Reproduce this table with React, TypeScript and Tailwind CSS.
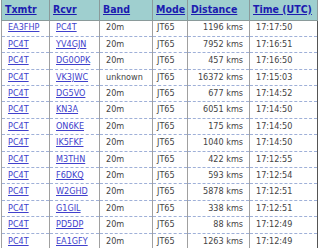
import React from "react";

const rows: [string, string, string, string, string, string][] = [
  ["EA3FHP", "PC4T", "20m", "JT65", "1196 kms", "17:17:50"],
  ["PC4T", "YV4GJN", "20m", "JT65", "7952 kms", "17:16:51"],
  ["PC4T", "DG0OPK", "20m", "JT65", "457 kms", "17:16:50"],
  ["PC4T", "VK3JWC", "unknown", "JT65", "16372 kms", "17:15:03"],
  ["PC4T", "DG5VO", "20m", "JT65", "677 kms", "17:14:52"],
  ["PC4T", "KN3A", "20m", "JT65", "6051 kms", "17:14:50"],
  ["PC4T", "ON6KE", "20m", "JT65", "175 kms", "17:14:50"],
  ["PC4T", "IK5FKF", "20m", "JT65", "1040 kms", "17:14:50"],
  ["PC4T", "M3THN", "20m", "JT65", "422 kms", "17:12:55"],
  ["PC4T", "F6DKQ", "20m", "JT65", "593 kms", "17:12:54"],
  ["PC4T", "W2GHD", "20m", "JT65", "5878 kms", "17:12:51"],
  ["PC4T", "G1GIL", "20m", "JT65", "338 kms", "17:12:51"],
  ["PC4T", "PD5DP", "20m", "JT65", "88 kms", "17:12:49"],
  ["PC4T", "EA1GFY", "20m", "JT65", "1263 kms", "17:12:49"],
];

const heads = ["Txmtr", "Rcvr", "Band", "Mode", "Distance", "Time (UTC)"];
const widths = ["w-[48px]", "w-[50px]", "w-[53px]", "w-[35px]", "w-[62px]", "w-[68px]"];

const cell =
  "py-0 border-x border-x-[#a0a0a0] border-b border-b-[#9fb0d8] [border-bottom-style:dashed]";

export default function App() {
  return (
    <div className="w-[320px] h-[248px] overflow-hidden bg-white pl-[1px]">
      <table
        className="border-collapse table-fixed w-[317px] text-[9px] text-[#444] whitespace-nowrap"
        style={{ fontFamily: '"DejaVu Sans Condensed", "DejaVu Sans", sans-serif', fontStretch: "condensed" }}
      >
        <thead>
          <tr className="bg-[#9fcfcf] h-[20px]">
            {heads.map((h, i) => (
              <th
                key={h}
                className={`${widths[i]} text-left font-bold text-[10.5px] px-[3px] py-0 border border-[#8a9a9a] border-t-0 overflow-hidden`}
              >
                <a className="text-[#1c1cb0] underline">{h}</a>
              </th>
            ))}
          </tr>
        </thead>
        <tbody>
          {rows.map((r, ri) => (
            <tr key={ri} className="h-[16.4px]">
              <td className={`pl-[6px] ${cell}`}>
                <a className="text-[#4040cc] underline">{r[0]}</a>
              </td>
              <td className={`pl-[6px] ${cell}`}>
                <a className="text-[#4040cc] underline">{r[1]}</a>
              </td>
              <td className={`pl-[6px] ${cell}`}>{r[2]}</td>
              <td className={`pl-[4px] ${cell}`}>{r[3]}</td>
              <td className={`pr-[6px] text-right ${cell}`}>{r[4]}</td>
              <td className="pl-[6px] py-0 border-l border-l-[#a0a0a0] border-r border-r-[#555] border-b border-b-[#9fb0d8] [border-bottom-style:dashed]">
                {r[5]}
              </td>
            </tr>
          ))}
        </tbody>
      </table>
    </div>
  );
}
